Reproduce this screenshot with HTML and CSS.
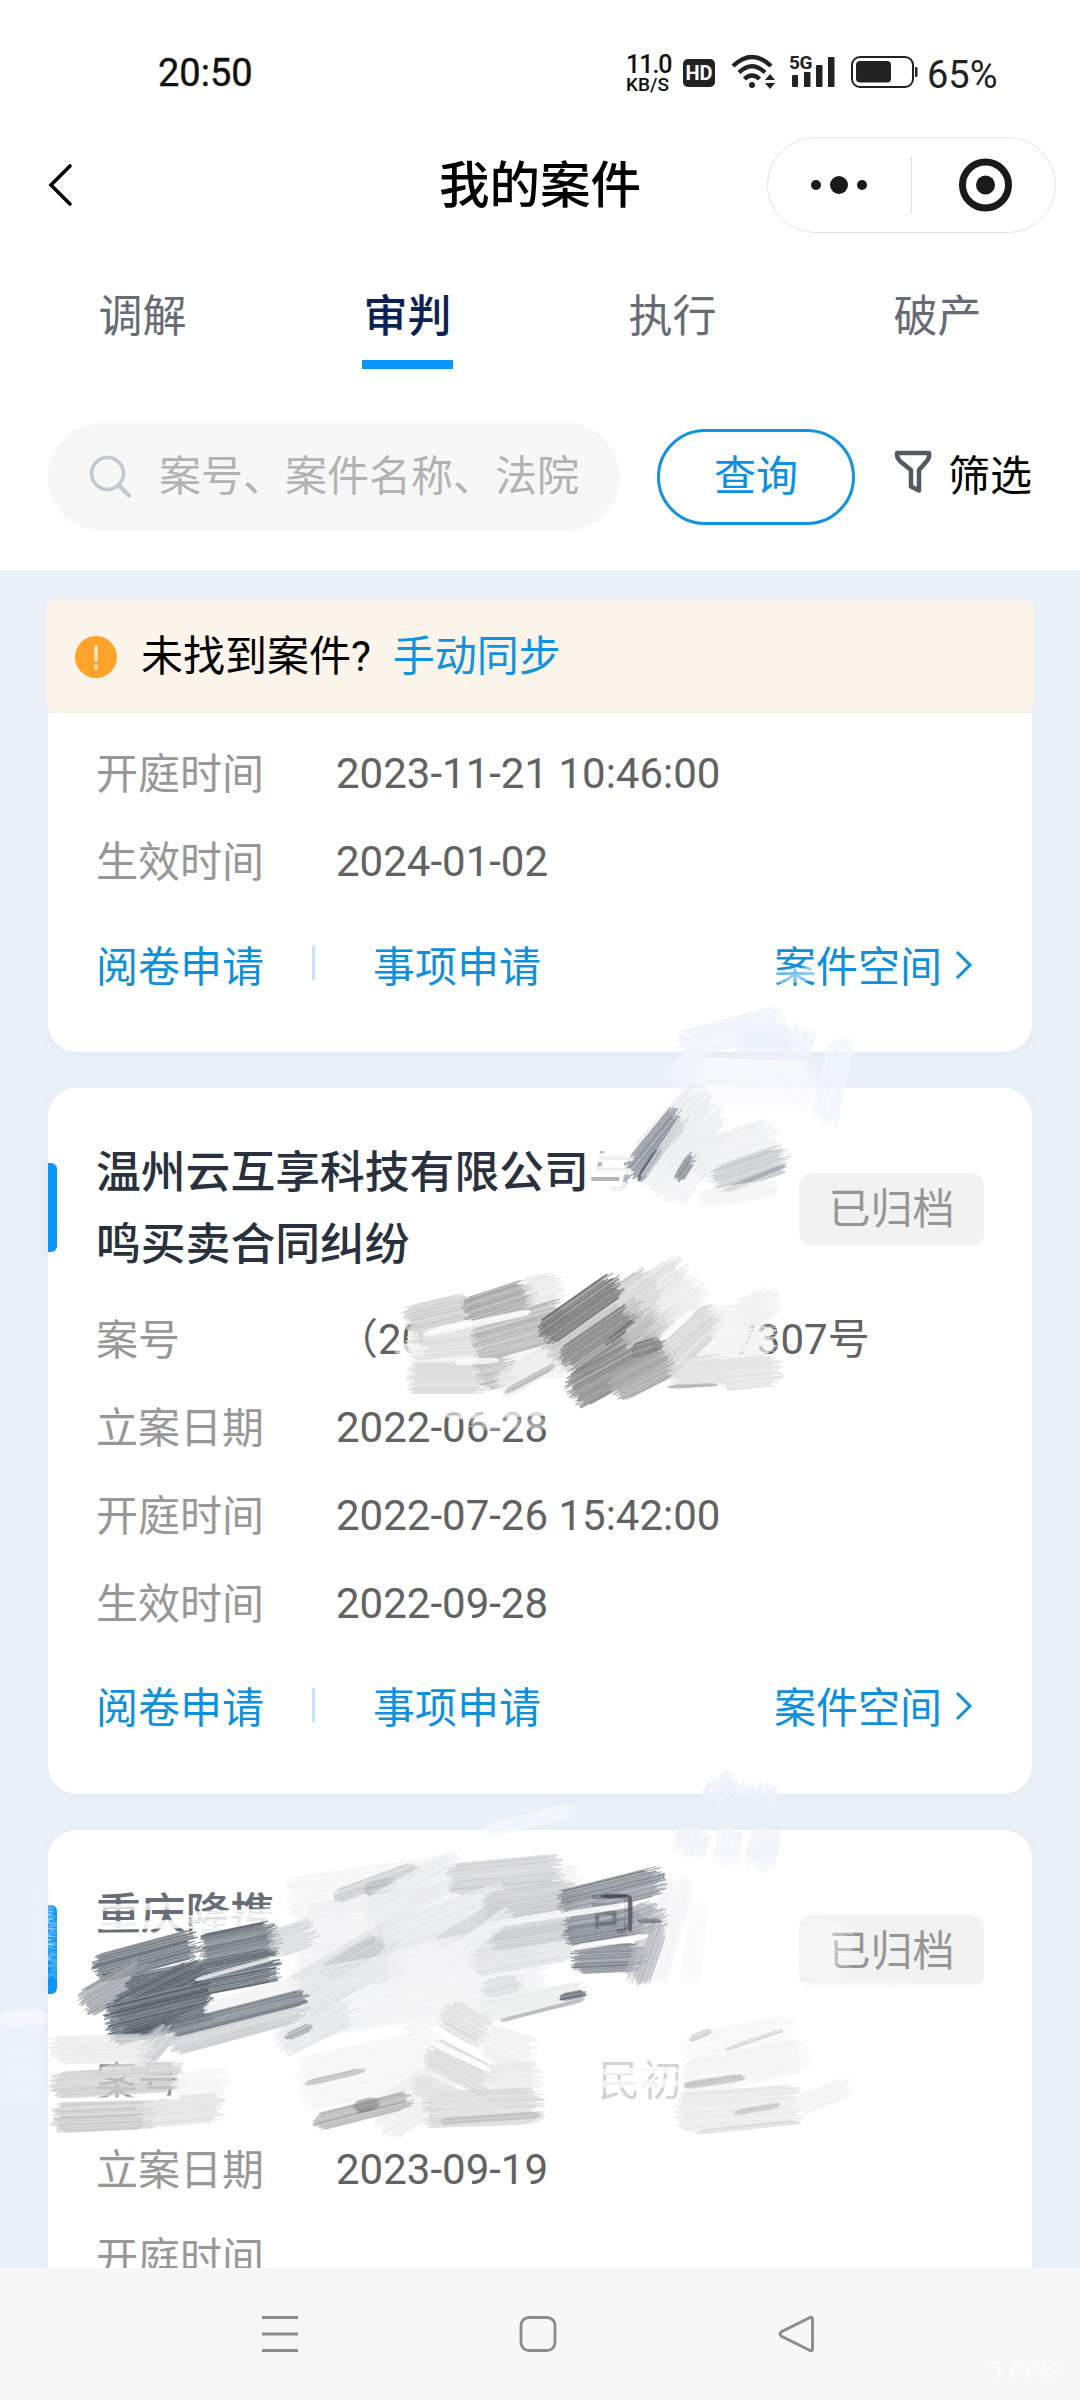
FILE: index.html
```
<!DOCTYPE html>
<html lang="zh-CN">
<head>
<meta charset="utf-8">
<title>我的案件</title>
<link rel="stylesheet" href="styles.css">
</head>
<body>
<div class="phone">
  <header class="top">
    <div class="status">
      <span class="clock">20:50</span>
      <div class="speed"><b>11.0</b><span>KB/S</span></div>
      <span class="hd">HD</span>
      <svg class="wifi" width="46" height="36" viewBox="0 0 46 36" fill="none" stroke="#222" stroke-width="4.4">
        <path d="M2 12Q21-6 40 12M8 18.5Q21 6 34 18.5M13.500 25Q21 18 28.500 25"/>
        <circle cx="21" cy="31" r="3" fill="#222" stroke="none"/>
        <path d="M39 20l5 6H34zM39 35l5-6H34z" fill="#222" stroke="none"/>
      </svg>
      <div class="signal"><span>5G</span>
        <svg width="44" height="30" viewBox="0 0 44 30" fill="#222"><rect y="18" width="6" height="12" rx="1"/><rect x="12" y="15" width="6.500" height="15" rx="1"/><rect x="24" y="8" width="6.500" height="22" rx="1"/><rect x="36" width="6.500" height="30" rx="1"/></svg>
      </div>
      <svg class="battery" width="68" height="32" viewBox="0 0 68 32"><rect x="1" y="1" width="61" height="30" rx="8" fill="none" stroke="#222" stroke-width="2"/><rect x="5" y="5" width="35" height="21.500" rx="4" fill="#222"/><rect x="64" y="11" width="2.500" height="10" rx="1" fill="#222"/></svg>
      <span class="percent">65%</span>
    </div>
    <div class="navbar">
      <svg class="back" width="26" height="44" viewBox="0 0 26 44" fill="none" stroke="#000" stroke-width="3.600" stroke-linecap="round"><path d="M22 3L3 22l19 19"/></svg>
      <h1>我的案件</h1>
      <div class="capsule">
        <svg width="286" height="93" viewBox="0 0 286 93" fill="#1a1a1a"><circle cx="48" cy="47" r="5"/><circle cx="71" cy="47" r="9"/><circle cx="94" cy="47" r="5"/><path d="M143 19h1v57h-1z" fill="#e2e2e2"/><circle cx="217.500" cy="47" r="23" fill="none" stroke="#1a1a1a" stroke-width="7"/><circle cx="217.500" cy="47" r="9.500"/></svg>
      </div>
    </div>
    <nav class="tabs"><a>调解</a><a class="active">审判</a><a>执行</a><a>破产</a></nav>
    <div class="searchbar">
      <div class="search">
        <svg width="44" height="44" viewBox="0 0 44 44" fill="none" stroke="#c3c9d3" stroke-width="3.600" stroke-linecap="round"><circle cx="18.500" cy="18.500" r="16"/><path d="M30.500 31L40 40.500" stroke-width="4.500"/></svg>
        <span>案号、案件名称、法院</span>
      </div>
      <button class="query">查询</button>
      <svg class="funnel" width="40" height="44" viewBox="0 0 40 44" fill="none" stroke="#555963" stroke-width="4.500" stroke-linejoin="round"><path d="M3 3h32q1 5-3 9l-7 8v20.500l-8-4V20L7 12Q2.500 8 3 3z"/></svg>
      <span class="filter">筛选</span>
    </div>
  </header>

  <main class="list">
    <div class="notice">
      <svg width="42" height="42" viewBox="0 0 42 42"><circle cx="21" cy="21" r="21" fill="#fea42c"/><path d="M21 11v13M21 30v2" stroke="#ffe9c8" stroke-width="3.400" stroke-linecap="round"/></svg>
      <span>未找到案件?</span><a>手动同步</a>
    </div>
    <section class="card first">
      <dl><dt>开庭时间</dt><dd>2023-11-21 10:46:00</dd><dt>生效时间</dt><dd>2024-01-02</dd></dl>
      <div class="actions"><a>阅卷申请</a><i></i><a>事项申请</a><a class="space">案件空间<svg width="20" height="32" viewBox="0 0 20 32"><path d="M3 3l13 13L3 29"/></svg></a></div>
    </section>
    <section class="card">
      <div class="head"><h2>温州云互享科技有限公司<span class="faint">与</span><br>鸣买卖合同纠纷</h2><span class="badge">已归档</span></div>
      <dl><dt>案号</dt><dd>（20<span class="tail">7307号</span></dd><dt>立案日期</dt><dd>2022-06-28</dd><dt>开庭时间</dt><dd>2022-07-26 15:42:00</dd><dt>生效时间</dt><dd>2022-09-28</dd></dl>
      <div class="actions"><a>阅卷申请</a><i></i><a>事项申请</a><a class="space">案件空间<svg width="20" height="32" viewBox="0 0 20 32"><path d="M3 3l13 13L3 29"/></svg></a></div>
    </section>
    <section class="card">
      <div class="head"><h2><span class="veiled">重庆隆携</span><span class="inc">司</span></h2><span class="badge">已归档</span></div>
      <dl><dt>案号</dt><dd><span class="court">民初</span></dd><dt>立案日期</dt><dd>2023-09-19</dd><dt>开庭时间</dt><dd></dd></dl>
    </section>
  </main>

  <footer class="keys">
    <svg width="40" height="40" viewBox="0 0 40 40"><path d="M2 3.500h36M2 20h36M2 36.500h36"/></svg>
    <svg width="40" height="40" viewBox="0 0 40 40"><rect x="3" y="3.500" width="34" height="33" rx="8"/></svg>
    <svg width="40" height="40" viewBox="0 0 40 40"><path d="M34 3.500q2.500-1.500 2.500 2v29q0 3.500-2.500 2L5 22q-2-2 0-4z"/></svg>
    <span class="mark">卡农社区</span>
  </footer>
  <svg class="brush" width="1080" height="2400" viewBox="0 0 1080 2400" aria-hidden="true"></svg>
</div>
<script src="brush.js"></script>
</body>
</html>
```
FILE: styles.css
```
* { box-sizing: border-box; margin: 0; padding: 0; }
body { background: #fff; font-family: Roboto, "Noto Sans CJK SC", sans-serif; font-size: 42px; color: #000; }
svg { display: block; flex: none; }
.phone { position: relative; width: 1080px; height: 2400px; overflow: hidden; display: flex; flex-direction: column; background: #ecf0f8; }
.top { height: 570px; background: #fff; flex: none; }

.status { height: 126px; padding: 54px 0 0 158px; display: flex; align-items: flex-start; color: #222; }
.clock { width: 468px; font-size: 38px; line-height: 38px; color: #111; -webkit-text-stroke: .4px; }
.speed { width: 57px; display: flex; flex-direction: column; color: #111; }
.speed b { font-size: 25px; line-height: 22px; font-weight: 500; letter-spacing: -1px; }
.speed span { font-size: 19px; line-height: 17px; font-weight: 500; }
.hd { width: 32px; height: 28px; margin: 5px 16px 0 0; border-radius: 5px; background: #222; color: #fff; font-size: 20px; font-weight: 700; line-height: 28px; text-align: center; }
.wifi { margin-right: 12px; }
.signal { width: 62px; height: 34px; position: relative; }
.signal span { position: absolute; left: 0; top: 0; font-size: 19px; font-weight: 700; line-height: 17px; letter-spacing: -.5px; }
.signal svg { margin: 3px 0 0 3px; }
.battery { margin: 2px 8px 0 0; }
.percent { font-size: 38px; line-height: 42px; }

.navbar { height: 118px; padding: 0 24px 1px 48px; display: grid; grid-template-columns: 288px 1fr 289px; align-items: center; }
.navbar h1 { margin-left: -4px; padding: 2px 19px 0 0; text-align: center; font-size: 50.500px; line-height: 90px; font-weight: 500; white-space: nowrap; }
.capsule { height: 96px; border: 1px solid #e4e4e4; border-radius: 48px; overflow: hidden; }

.tabs { height: 126px; padding: 0 10px; display: grid; grid-template-columns: repeat(4, 1fr); }
.tabs a { height: 125px; margin: 0 87px; line-height: 147px; font-size: 44px; text-align: center; color: #666b75; border-bottom: 9px solid transparent; white-space: nowrap; }
.tabs a.active { color: #0d2253; font-weight: 500; border-color: #0896fa; }

.searchbar { margin-top: 53px; height: 108px; padding-left: 48px; display: flex; align-items: center; }
.search { width: 572px; height: 108px; border-radius: 54px; background: #f7f7f7; display: flex; align-items: center; padding-left: 41px; gap: 26px; color: #b3b3b3; line-height: 104px; }
.search span { white-space: nowrap; }
.query { width: 198px; height: 96px; margin-left: 37px; border: 3px solid #1193e0; border-radius: 48px; background: #fff; color: #0b90e2; font: inherit; line-height: 84px; padding-bottom: 1px; }
.funnel { margin: 0 14px 10px 39px; }
.filter { line-height: 104px; padding-bottom: 1px; }

.list { height: 1698px; padding: 30px 48px 0; overflow: hidden; flex: none; }
.notice { height: 113px; margin: 0 -2px; padding-left: 29px; border-radius: 10px; background: #fbf4ea; display: flex; align-items: center; line-height: 100px; }
.notice span { margin: 1px 22px 0 24px; }
.notice a { margin-top: 1px; color: #1193e0; }
.card { position: relative; margin-bottom: 36px; padding: 48px 49px 31px 48px; border-radius: 28px; background: #fff; box-shadow: 0 2px 12px rgba(190, 205, 225, .2); }
.card.first { padding-top: 15px; border-radius: 0 0 28px 28px; padding-bottom: 30px; }
.head { height: 146px; display: flex; justify-content: space-between; }
.head::before { content: ""; position: absolute; left: 0; top: 75px; width: 9px; height: 89px; background: #0896fa; border-radius: 0 6px 6px 0; }
h2 { padding-top: 1px; font-size: 44.800px; line-height: 72px; font-weight: 500; color: #29313f; white-space: nowrap; }
.faint { color: #b4b7bc; }
.veiled { color: #686e79; }
.inc { margin-left: 313px; }
.badge { width: 185px; height: 73px; margin: 37px -1px 0 0; border-radius: 13px; background: #f2f2f2; color: #969696; text-align: center; line-height: 73px; }
dl { padding-top: 12px; display: grid; grid-template-columns: 240px 1fr; grid-auto-rows: 88px; line-height: 88px; white-space: nowrap; }
.first dl { padding-top: 0; }
dt { color: #989898; padding-top: 3px; }
dd { color: #626262; padding-top: 2px; }
.tail { margin-left: 308px; }
.court { margin-left: 262px; color: #d4d4d4; }
.actions { height: 117px; display: flex; align-items: center; color: #0f90dd; }
.first .actions { height: 118px; }
.actions i { width: 3px; height: 34px; background: #c4e4f7; margin: 0 58px 0 48px; }
.actions .space { display: flex; align-items: center; margin-left: auto; gap: 12px; padding-right: 9px; }
.space svg { fill: none; stroke: #0f90dd; stroke-width: 3; margin-top: 3px; }

.keys { position: relative; height: 132px; padding: 0 264px 1px 260px; background: #f7f7f7; display: flex; align-items: center; justify-content: space-between; }
.keys svg { fill: none; stroke: #8c8c8c; stroke-width: 2.800; }
.mark { position: absolute; right: 22px; bottom: 20px; font-size: 17px; color: #fff; }
.brush { position: absolute; left: 0; top: 0; pointer-events: none; }
```
FILE: brush.js
```
// Dry-brush redaction marks: each entry is a stroke made of fine bristles.
// x1, y1, x2, y2, width, colour, opacity
const strokes = [
  // between the first two cards
  [680,1047,782,1020,30,'#f1f4fb',.9],[802,1028,794,1062,28,'#f1f4fb',.9],[842,1040,824,1122,26,'#f3f6fc',.8],
  [740,1045,790,1045,44,'#edf1f9',1],[675,1085,700,1055,28,'#f5f8fd',.8],[700,1078,812,1082,40,'#fafbfe',.8],[780,1075,812,1100,30,'#f5f8fd',.9],
  [700,1095,815,1100,20,'#fdfdff',.8],
  [774,978,820,973,14,'#ffffff',.4],
  [650,1165,710,1100,52,'#e8eaed',.7],[630,1176,680,1115,24,'#878c96',.8],[640,1180,660,1150,9,'#3b4351',.7],
  [660,1195,705,1125,52,'#f0f1f3',.7],[678,1180,694,1155,11,'#7b8088',.75],[695,1165,775,1138,44,'#eeeff1',.8],
  [715,1182,784,1158,28,'#c8cacd',.85],[725,1190,786,1165,4,'#94989d',.7],[700,1200,775,1188,18,'#f3f3f4',.7],
  [588,1158,632,1158,8,'#ffffff',1],[588,1171,632,1171,8,'#ffffff',1],[588,1188,632,1188,10,'#ffffff',1],
  // case number of the second card
  [410,1345,770,1340,70,'#f3f3f3',.8],
  [406,1320,470,1305,26,'#cfcfcf',.9],[466,1313,530,1292,28,'#aaaaaa',1],[526,1292,560,1286,28,'#e9e9e9',.8],
  [410,1346,482,1340,30,'#dedede',.9],[476,1343,565,1318,40,'#bcbcbc',.9],[410,1378,485,1378,32,'#dadada',.9],[478,1372,510,1365,40,'#c2c2c2',.9],
  [424,1334,530,1312,6,'#ffffff',1],[455,1363,500,1360,5,'#ffffff',.9],[500,1388,565,1348,26,'#eeeeee',1],[505,1392,555,1365,5,'#b8b8b8',.9],
  [550,1355,655,1285,44,'#cbcbcb',.9],[543,1335,617,1283,27,'#747474',1],[568,1365,645,1312,36,'#8f8f8f',1],[605,1345,643,1315,5,'#6a6a6a',.8],
  [572,1394,662,1345,36,'#848484',1],[615,1390,674,1360,28,'#b2b2b2',.95],[630,1346,670,1314,30,'#cacaca',.95],
  [625,1310,682,1268,32,'#e2e2e2',.8],[660,1318,700,1286,30,'#ececec',.8],[632,1352,660,1343,14,'#808080',.9],
  [672,1357,716,1315,32,'#d8d8d8',.9],[672,1375,725,1368,30,'#e2e2e2',.9],[668,1387,718,1385,3,'#a8a8a8',.7],[660,1340,692,1312,6,'#ffffff',.9],
  [740,1315,776,1300,30,'#f1f1f1',.8],[716,1342,752,1332,34,'#f5f5f5',.9],[720,1376,777,1370,32,'#e4e4e4',.9],
  [395,1350,426,1350,12,'#ffffff',.6],[445,1412,550,1408,16,'#ffffff',.7],[470,1424,550,1424,12,'#ffffff',.3],
  // lavender wisps around the third card
  [728,1772,718,1800,14,'#f1f3fb',.9],[718,1783,710,1800,20,'#eff2fa',.9],[740,1783,738,1800,28,'#eff2fa',.9],[765,1785,763,1800,26,'#f0f3fb',.9],
  [696,1830,688,1852,34,'#f0f3fa',.9],[730,1830,724,1862,30,'#f3f5fc',.8],[768,1830,758,1866,30,'#f0f3fa',.9],[714,1834,710,1865,7,'#ffffff',.9],[746,1834,740,1860,6,'#ffffff',.8],
  [485,1832,572,1811,14,'#f6f8fd',.8],
  [36,1925,47,1925,70,'#f2f5fc',.5],[0,2020,47,2017,16,'#f9faff',.7],[0,2062,47,2062,80,'#f1f5fc',.5],[48,1945,57,1945,68,'#ffffff',.2],
  // party names of the third card
  [97,1926,185,1924,8,'#ffffff',1],[97,1908,185,1906,6,'#ffffff',.9],[100,1936,190,1934,5,'#ffffff',.7],[190,1928,290,1924,32,'#ffffff',1],
  [290,1900,430,1880,44,'#f6f6f7',.9],[310,1935,580,1895,60,'#f1f1f3',.8],[300,1995,540,1955,90,'#f1f2f4',.8],
  [335,1898,417,1868,14,'#cbcdd0',.8],[365,1890,395,1885,14,'#b8bbbf',.8],[370,1918,458,1865,38,'#ebecee',.8],
  [450,1880,558,1870,32,'#d1d2d5',.9],[390,1940,505,1898,34,'#eaebed',.8],[485,1908,575,1893,28,'#cccdd0',.9],[437,1945,502,1905,14,'#d0d2d6',.7],
  [470,1958,572,1940,40,'#e2e3e5',.9],[490,1940,575,1927,22,'#cacccf',.8],[450,1963,510,1912,16,'#f2f3f4',.8],
  [295,2000,395,1942,46,'#e2e3e6',.8],[325,1975,382,1940,20,'#c6c8cd',.8],
  [95,1970,195,1943,28,'#6d737c',1],[203,1952,275,1937,34,'#757b83',1],[272,1945,312,1932,28,'#d3d5d8',.8],
  [84,2005,145,1970,28,'#999da3',.9],[130,1992,276,1964,34,'#69707a',1],[120,2020,205,1978,46,'#6a717a',1],[108,2026,208,2002,42,'#666d77',1],
  [195,1980,275,1958,4,'#ffffff',.8],[205,2010,300,1982,13,'#f4f4f5',1],[172,2044,304,2008,24,'#cbcdd0',.85],[172,2030,306,1996,15,'#7e848c',.95],[142,2060,168,2030,22,'#c6c8cc',.8],
  [280,2045,350,2010,28,'#e4e5e7',.8],[285,2038,312,2026,7,'#a2a6ac',.8],[320,1980,400,1966,26,'#eaebed',.8],
  [390,1975,470,1955,44,'#f4f4f6',.7],[400,2015,470,1990,44,'#f6f6f7',.8],
  [652,1980,680,1880,30,'#f4f4f6',.7],[690,1985,700,1900,20,'#fafafb',.6],[560,1905,660,1880,28,'#8a8f96',1],[565,1933,642,1920,30,'#868c94',1],
  [628,1925,660,1912,30,'#adaeb5',.9],[574,1960,640,1957,28,'#8a8f96',1],[636,1982,656,1925,26,'#b5b6bd',.8],[562,1915,635,1904,5,'#ffffff',1],[572,1948,648,1936,5,'#ffffff',1],
  [600,1896,630,1896,3,'#4f5560',1],[630,1896,630,1932,4,'#454b57',1],[638,1921,662,1921,4,'#6d6f78',.9],
  [480,2012,585,1992,22,'#eceded',.9],[500,2021,585,1999,3,'#979ba2',.7],[560,1998,586,1993,7,'#6e747d',.9],[483,1990,520,1982,18,'#d9dadd',.7],
  // third card, case number row
  [53,2050,150,2048,28,'#eaeaea',.8],[53,2086,178,2078,26,'#cacaca',.8],[175,2090,225,2082,30,'#f5f5f5',.8],[55,2118,152,2114,30,'#cbcbcb',.95],[140,2114,220,2107,28,'#e3e3e3',.9],[55,2101,180,2098,4,'#ffffff',1],
  [100,2072,180,2066,12,'#dddddd',1],
  [300,2085,440,2055,54,'#f6f6f6',.8],[305,2084,365,2070,5,'#c0c0c0',.8],[380,2125,450,2075,44,'#efefef',.9],
  [445,2012,487,2036,32,'#e0e0e0',.9],[430,2052,488,2082,32,'#dddddd',1],[485,2040,532,2055,34,'#f1f1f1',.9],[485,2078,536,2076,30,'#ebebeb',.9],
  [425,2110,538,2106,36,'#d9d9d9',.9],[415,2083,500,2118,22,'#e3e3e3',.9],[315,2123,410,2099,17,'#b0b0b0',.9],[355,2108,378,2102,12,'#888888',.8],[440,2122,540,2115,6,'#bebebe',.8],[430,2042,490,2070,5,'#ffffff',1],
  [685,2050,790,2030,30,'#f7f7f7',.7],[690,2040,712,2030,6,'#cacaca',.7],[725,2050,784,2030,4,'#d2d2d2',.8],[683,2080,805,2055,34,'#f4f4f4',.8],
  [684,2086,744,2077,7,'#c4c4c4',.9],[678,2112,798,2104,38,'#e8e8e8',.85],[735,2113,780,2105,5,'#c6c6c6',.8],[695,2133,800,2122,4,'#d6d6d6',.8],[795,2108,850,2086,20,'#f4f4f4',.8],
  [600,2072,680,2070,5,'#ffffff',.9],[600,2084,680,2083,7,'#ffffff',.8],
  [790,1986,985,1987,5,'#ffffff',.7],[795,1945,848,1955,60,'#ffffff',.35]
];

let seed = 7;
const rnd = () => (seed = (seed * 16807) % 2147483647) / 2147483647;
// Shifts a colour's distance from white by the share t.
const shade = (hex, t) => 'rgb(' + [1, 3, 5].map(i => {
  const v = parseInt(hex.slice(i, i + 2), 16);
  return Math.max(0, Math.round(255 - (255 - v) * (1 + t)));
}).join() + ')';
const svg = document.querySelector('.brush');
let out = '';
for (const [x1, y1, x2, y2, w, colour, alpha] of strokes) {
  const len = Math.hypot(x2 - x1, y2 - y1);
  const ux = (x2 - x1) / len, uy = (y2 - y1) / len;
  const rough = Math.min(10, w / 2.6);
  for (let o = -w / 2; o <= w / 2; o += .7) {
    const round = Math.pow(Math.abs(o) / (w / 2), 3) * Math.min(7, len / 6);
    const a = round + (rnd() - .5) * rough, b = len - round - (rnd() - .5) * rough * 1.6;
    if (b <= a) continue;
    const p = d => (x1 + ux * d - uy * o).toFixed(1) + ' ' + (y1 + uy * d + ux * o).toFixed(1);
    out += `<path d="M${p(a)}L${p(b)}" stroke="${shade(colour, (rnd() - .55) * .5)}" stroke-width="${(.8 + rnd() * .8).toFixed(1)}" opacity="${(alpha * (.6 + rnd() * .35)).toFixed(2)}"/>`;
  }
}
svg.innerHTML = out;
```
